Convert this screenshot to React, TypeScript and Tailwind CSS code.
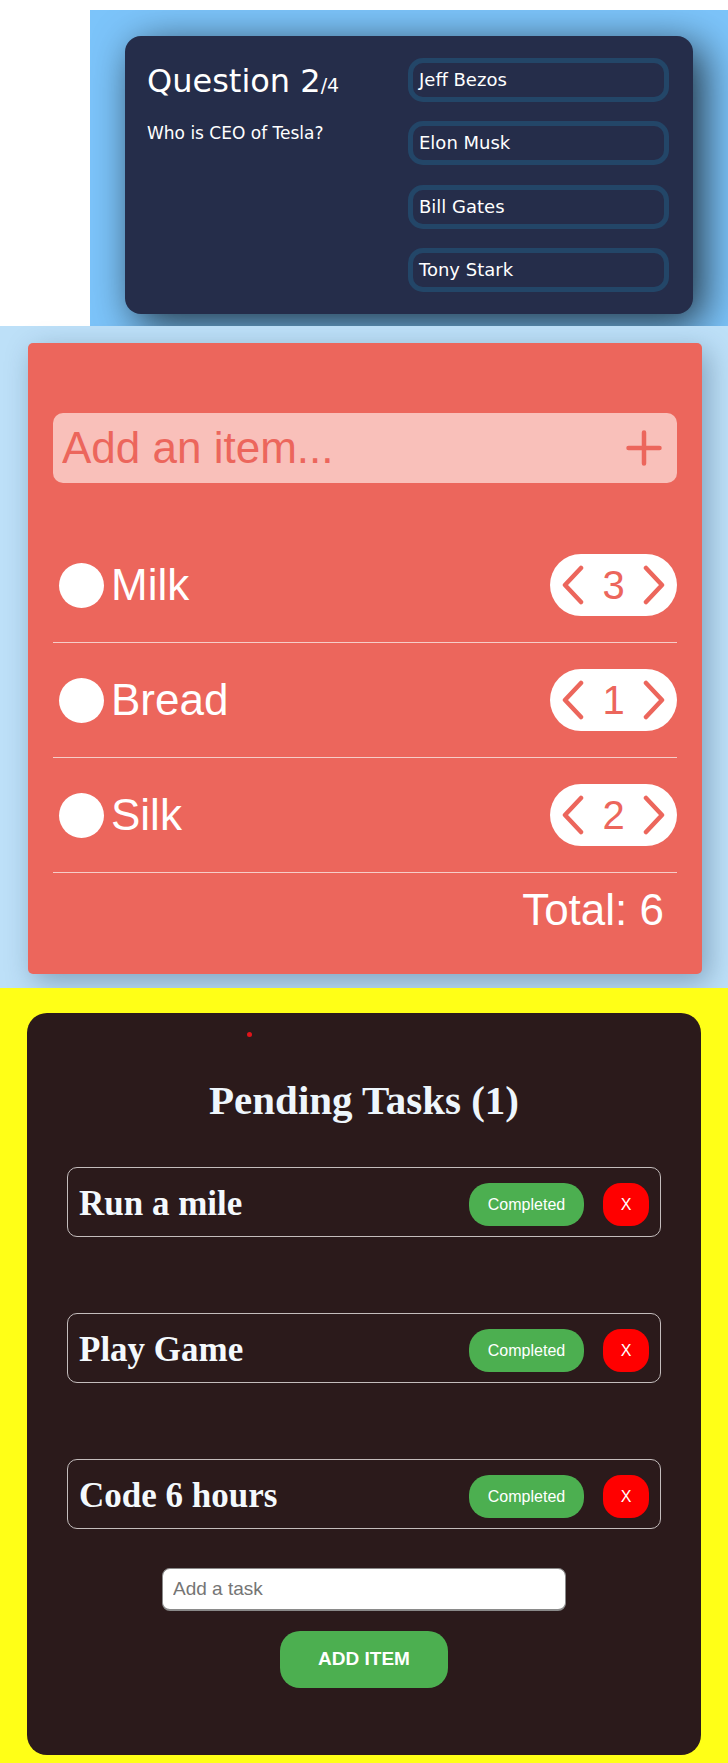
const answers = ["Jeff Bezos", "Elon Musk", "Bill Gates", "Tony Stark"];

const items = [
  { name: "Milk", quantity: 3 },
  { name: "Bread", quantity: 1 },
  { name: "Silk", quantity: 2 },
];

const tasks = ["Run a mile", "Play Game", "Code 6 hours"];

function Chevron({ dir }: { dir: "left" | "right" }) {
  return (
    <svg width="22" height="40" viewBox="0 0 22 40" fill="none">
      <polyline
        points={dir === "left" ? "19,3 3,20 19,37" : "3,3 19,20 3,37"}
        stroke="#ec665c"
        strokeWidth="4.5"
        strokeLinecap="round"
        strokeLinejoin="round"
      />
    </svg>
  );
}

function Quiz() {
  return (
    <div className="bg-white pt-[10px] pl-[90px]">
      <div className="bg-[#7cc4fa] overflow-hidden pt-[26px] pb-[12px] px-[35px]">
        <div className="flex w-[568px] h-[278px] rounded-[16px] bg-[#252d4a] pl-[22px] pr-[24px] py-[22px] text-white font-['DejaVu_Sans',Verdana,sans-serif] shadow-[10px_10px_42px_0px_rgba(0,0,0,0.75)]">
          <div className="w-1/2 pt-[5px]">
            <div className="mb-[20px] text-[19px] leading-[36px]">
              <span className="text-[32px]">Question 2</span>/4
            </div>
            <div className="text-[17px] leading-[20px]">Who is CEO of Tesla?</div>
          </div>
          <div className="w-1/2 flex flex-col justify-between">
            {answers.map((answer) => (
              <button
                key={answer}
                className="flex items-center w-full h-[44px] rounded-[15px] border-[5px] border-[#234668] bg-[#252d4a] px-[6px] text-[18px] leading-[22px] text-white"
              >
                {answer}
              </button>
            ))}
          </div>
        </div>
      </div>
    </div>
  );
}

function ShoppingList() {
  return (
    <div className="bg-[#bde0f8] pt-[17px] pb-[14px] pl-[28px] pr-[26px] font-['Liberation_Sans',Arial,sans-serif]">
      <div className="rounded-[5px] bg-[#ec665c] pt-[70px] pb-[39px] px-[25px] text-white shadow-[6px_8px_28px_rgba(20,50,80,0.35)]">
        <div className="flex items-center h-[70px] rounded-[10px] bg-[#f9c0ba] pl-[9px] pr-[15px]">
          <input
            placeholder="Add an item..."
            className="flex-1 min-w-0 bg-transparent outline-none text-[44px] text-[#ec665c] placeholder:text-[#ec665c]"
          />
          <svg width="36" height="36" viewBox="0 0 36 36" fill="none">
            <path d="M18 2.5v31M2.5 18h31" stroke="#ec665c" strokeWidth="4.5" strokeLinecap="round" />
          </svg>
        </div>
        <div className="mt-[45px]">
          {items.map((item) => (
            <div
              key={item.name}
              className="flex items-center justify-between py-[26px] border-b border-[#f6cdc8]"
            >
              <div className="flex items-center">
                <div className="ml-[6px] w-[45px] h-[45px] rounded-full bg-white" />
                <span className="ml-[7px] text-[44px] leading-[50px]">{item.name}</span>
              </div>
              <div className="flex items-center justify-between w-[127px] h-[62px] rounded-full bg-white px-[12px]">
                <Chevron dir="left" />
                <span className="text-[40px] leading-[46px] text-[#ec665c]">{item.quantity}</span>
                <Chevron dir="right" />
              </div>
            </div>
          ))}
        </div>
        <div className="pt-[12px] pr-[13px] text-right text-[44px] leading-[50px]">Total: 6</div>
      </div>
    </div>
  );
}

function Todo() {
  return (
    <div className="bg-[#ffff17] pt-[25px] pb-[8px] px-[27px]">
      <div className="relative rounded-[20px] bg-[#2b1a1b] pt-[65px] pb-[67px] px-[40px]">
        <div className="absolute left-[220px] top-[19px] w-[5px] h-[5px] rounded-full bg-[#e0141a]" />
        <h1 className="text-center text-[41px] leading-[45px] font-bold text-[#eef6fc] font-['Liberation_Serif',Cambria,serif]">
          Pending Tasks (1)
        </h1>
        <div className="mt-[44px] flex flex-col gap-[76px]">
          {tasks.map((task) => (
            <div
              key={task}
              className="flex items-center justify-between h-[70px] rounded-[10px] border border-[#c4bdbd] px-[11px]"
            >
              <span className="pt-[3px] text-[35px] leading-[44px] font-bold text-[#f4f9fd] font-['Liberation_Serif',Cambria,serif]">
                {task}
              </span>
              <div className="flex items-center pt-[5px] font-['Liberation_Sans',Arial,sans-serif] text-[16px] text-white">
                <button className="w-[115px] h-[43px] rounded-[20px] bg-[#4caf50]">Completed</button>
                <button className="ml-[19px] w-[46px] h-[43px] rounded-[18px] bg-[#ff0000]">X</button>
              </div>
            </div>
          ))}
        </div>
        <div className="mt-[39px] flex flex-col items-center font-['Liberation_Sans',Arial,sans-serif]">
          <input
            placeholder="Add a task"
            className="w-[404px] h-[43px] rounded-[8px] bg-white border border-[#8a8a8a] border-b-2 px-[10px] text-[19px] text-black placeholder:text-[#757575] outline-none"
          />
          <button className="mt-[20px] w-[168px] h-[57px] rounded-[20px] bg-[#4caf50] text-[19px] font-bold text-white">
            ADD ITEM
          </button>
        </div>
      </div>
    </div>
  );
}

export default function App() {
  return (
    <div className="w-full">
      <Quiz />
      <ShoppingList />
      <Todo />
    </div>
  );
}
